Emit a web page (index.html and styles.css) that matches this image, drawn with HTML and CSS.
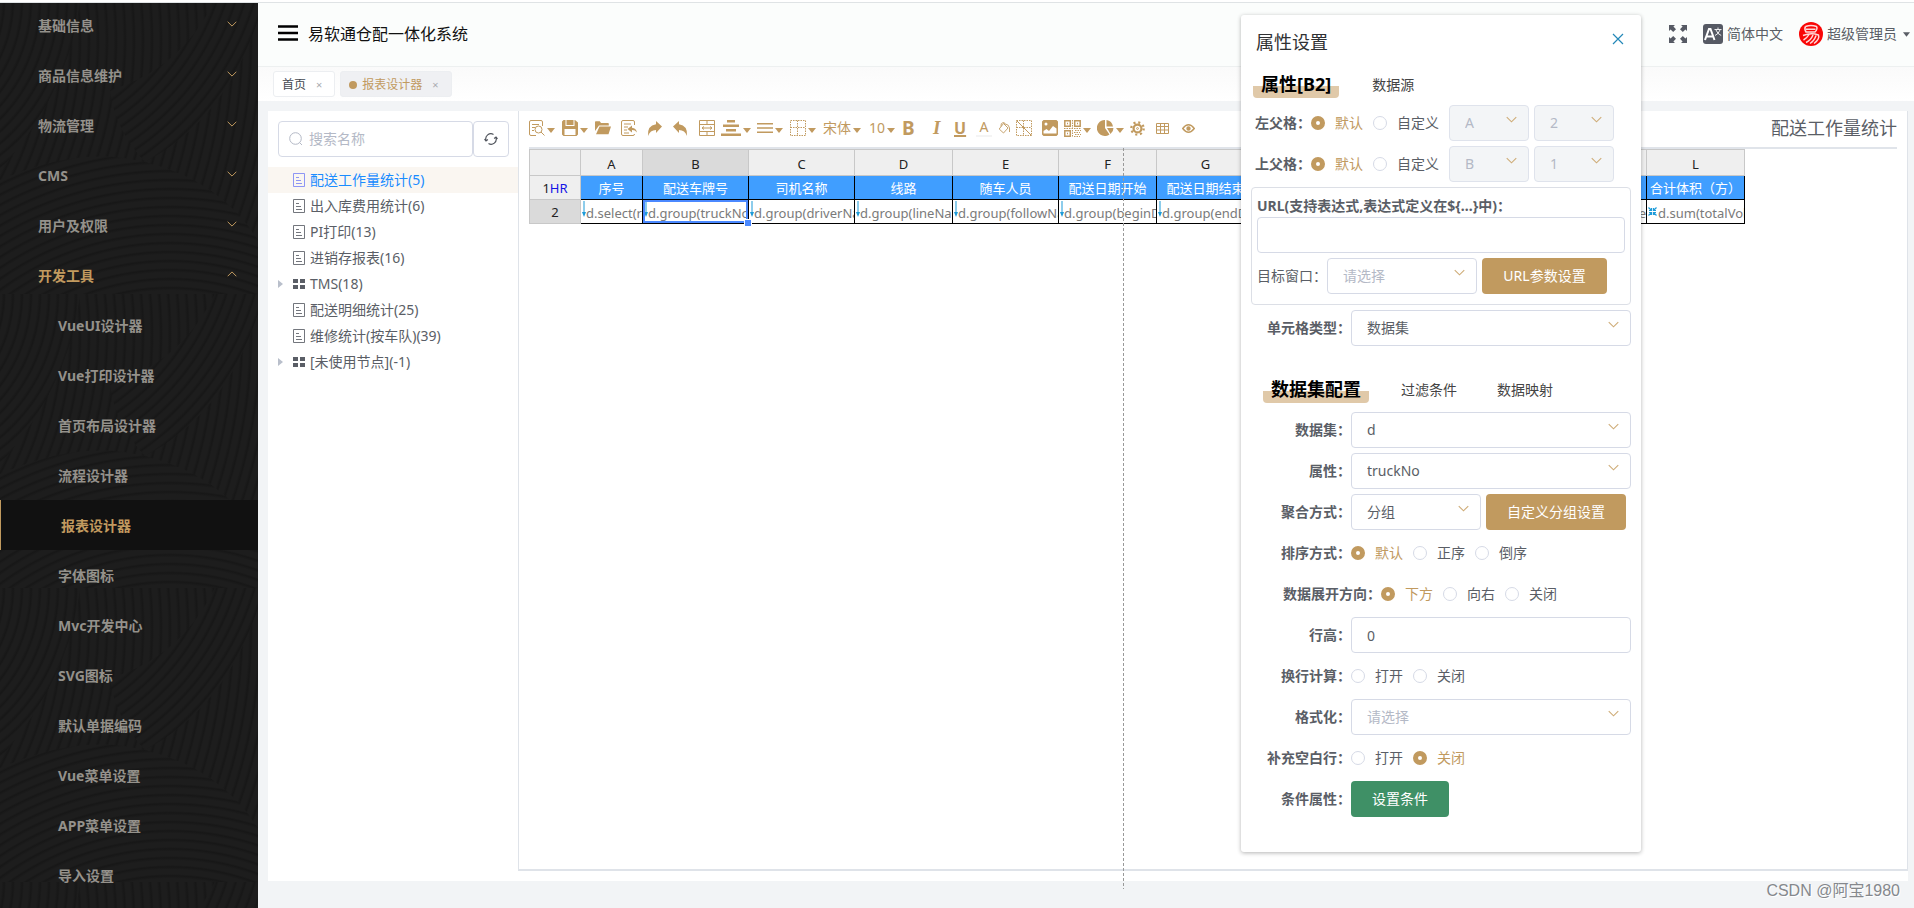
FILE: index.html
```html
<!DOCTYPE html>
<html lang="zh-CN">
<head>
<meta charset="utf-8">
<title>易软通仓配一体化系统</title>
<link rel="stylesheet" href="styles.css">
</head>
<body>
<svg class="defs" aria-hidden="true">
  <defs>
    <symbol id="chev" viewBox="0 0 12 7"><path d="M.8.8 6 6 11.2.8" fill="none" stroke="currentColor" stroke-width="1.2"/></symbol>
    <symbol id="caret" viewBox="0 0 8 5"><path d="M0 0h8L4 5z" fill="currentColor"/></symbol>
    <symbol id="doc" viewBox="0 0 12 14"><path d="M.5.5h11v13H.5zM3 4.500h3M3 7.500h5M3 10.500h6" fill="none" stroke="currentColor" stroke-opacity=".85"/></symbol>
    <symbol id="grid4" viewBox="0 0 12 12"><path d="M0 1h5v4H0zM7 1h5v4H7zM0 7h5v4H0zM7 7h5v4H7z" fill="currentColor"/></symbol>
    <symbol id="down" viewBox="0 0 4 16"><path d="M2 0v12" stroke="#1d9bd8" fill="none"/><path d="M0 11h4L2 16z" fill="#1d9bd8"/></symbol>
  </defs>
</svg>
<div class="app">
  <aside class="side">
    <svg class="side-bg" aria-hidden="true">
      <defs>
        <radialGradient id="g1" gradientUnits="userSpaceOnUse" cx="-260" cy="40" r="9" spreadMethod="repeat"><stop offset="0" stop-color="#1d1d1d"/><stop offset=".5" stop-color="#1d1d1d"/><stop offset=".8" stop-color="#171717"/><stop offset="1" stop-color="#1d1d1d"/></radialGradient>
        <radialGradient id="g2" href="#g1" gradientUnits="userSpaceOnUse" cx="-20" cy="-80" r="9" spreadMethod="repeat"/>
        <radialGradient id="g3" href="#g1" gradientUnits="userSpaceOnUse" cx="170" cy="520" r="9" spreadMethod="repeat"/>
        <radialGradient id="g4" href="#g1" gradientUnits="userSpaceOnUse" cx="-120" cy="0" r="9" spreadMethod="repeat"/>
        <pattern id="waves" width="258" height="294" patternUnits="userSpaceOnUse">
          <rect width="258" height="294" fill="url(#g1)"/>
          <path d="M0 0H80Q70 90 0 170z" fill="url(#g4)"/>
          <path d="M258 20Q225 120 145 162Q115 130 110 90Q180 70 215 0H258z" fill="url(#g2)"/>
          <path d="M0 180Q80 145 145 162Q220 180 258 240V294H0z" fill="url(#g3)"/>
        </pattern>
      </defs>
      <rect width="100%" height="100%" fill="url(#waves)"/>
    </svg>
    <nav class="menu">
      <a href="#">基础信息<svg><use href="#chev"/></svg></a>
      <a href="#">商品信息维护<svg><use href="#chev"/></svg></a>
      <a href="#">物流管理<svg><use href="#chev"/></svg></a>
      <a href="#">CMS<svg><use href="#chev"/></svg></a>
      <a href="#">用户及权限<svg><use href="#chev"/></svg></a>
      <a href="#" class="open">开发工具<svg><use href="#chev"/></svg></a>
      <a href="#" class="sub">VueUI设计器</a>
      <a href="#" class="sub">Vue打印设计器</a>
      <a href="#" class="sub">首页布局设计器</a>
      <a href="#" class="sub">流程设计器</a>
      <a href="#" class="sub active">报表设计器</a>
      <a href="#" class="sub">字体图标</a>
      <a href="#" class="sub">Mvc开发中心</a>
      <a href="#" class="sub">SVG图标</a>
      <a href="#" class="sub">默认单据编码</a>
      <a href="#" class="sub">Vue菜单设置</a>
      <a href="#" class="sub">APP菜单设置</a>
      <a href="#" class="sub">导入设置</a>
    </nav>
  </aside>

  <div class="main">
    <header class="top">
      <button class="burger" aria-label="菜单"><svg width="20" height="16" viewBox="0 0 20 16"><path d="M0 1.500h20M0 8h20M0 14.500h20" stroke="#000" stroke-width="2.400"/></svg></button>
      <h1>易软通仓配一体化系统</h1>
      <div class="user">
        <button aria-label="全屏"><svg width="18" height="18" viewBox="0 0 18 18" fill="#565a64"><path d="M0 0h6L4.400 1.600 7 4.200 4.200 7 1.600 4.400 0 6zM18 0v6l-1.600-1.600L13.800 7 11 4.200l2.600-2.600L12 0zM0 18v-6l1.600 1.600L4.200 11 7 13.800l-2.600 2.600L6 18zM18 18h-6l1.600-1.600L11 13.800 13.800 11l2.600 2.600L18 12z"/></svg></button>
        <button class="lang"><svg width="20" height="20" viewBox="0 0 20 20"><rect width="20" height="20" rx="3" fill="#565a64"/><path d="M2 16 6 5h1.500l4 11M3.500 12.500h6.500" stroke="#fff" stroke-width="2" fill="none"/><path d="M11.500 5.500h7M15 3.500v2M17 6q-1.500 4-5 5.500M13 6q1.500 4 5.200 5.500" stroke="#fff" stroke-width=".9" fill="none"/></svg>简体中文</button>
        <button class="who"><svg width="24" height="24" viewBox="0 0 24 24"><circle cx="12" cy="12" r="12" fill="#f90606"/><g fill="none" stroke="#ffd9d9" stroke-width="1.500"><path d="M6.500 4.500Q12 2.500 17.500 4.500 19 7 16 10H7Q5 7 6.500 4.500M7 7.300h9.500M4 13.500Q12 10.500 19.500 13 21 17 15 21.500M10 12.500Q8 16 4.500 18M14 13q-2 5-7 7.500M17 13.500q-1.500 5-6 8"/></g></svg>超级管理员<svg class="car" width="7" height="5"><use href="#caret"/></svg></button>
      </div>
    </header>
    <nav class="tags">
      <a href="#">首页<span>×</span></a>
      <a href="#" class="on"><i></i>报表设计器<span>×</span></a>
    </nav>

    <div class="card">
      <section class="tree">
        <div class="search">
          <label class="field"><svg width="14" height="14" viewBox="0 0 14 14" fill="none" stroke="#b4b9c6"><circle cx="6.500" cy="6.500" r="5.800"/><path d="m10.500 10.500 2.500 2.500"/></svg><input type="text" placeholder="搜索名称" aria-label="搜索名称"></label>
          <button aria-label="刷新"><svg width="14" height="14" viewBox="0 0 14 14" fill="none" stroke="#50545c" stroke-width="1.200"><path d="M2 8.500A5.200 5.200 0 0 1 9.500 2.400M12 5.500A5.200 5.200 0 0 1 4.500 11.600M.5 7.200 2 9l1.900-1.400M10.100 6.400 12 5l1.500 1.800"/></svg></button>
        </div>
        <ul>
          <li class="sel"><b></b><svg><use href="#doc"/></svg>配送工作量统计(5)</li>
          <li><b></b><svg><use href="#doc"/></svg>出入库费用统计(6)</li>
          <li><b></b><svg><use href="#doc"/></svg>PI打印(13)</li>
          <li><b></b><svg><use href="#doc"/></svg>进销存报表(16)</li>
          <li><b class="tri"></b><svg><use href="#grid4"/></svg>TMS(18)</li>
          <li><b></b><svg><use href="#doc"/></svg>配送明细统计(25)</li>
          <li><b></b><svg><use href="#doc"/></svg>维修统计(按车队)(39)</li>
          <li><b class="tri"></b><svg><use href="#grid4"/></svg>[未使用节点](-1)</li>
        </ul>
      </section>

      <section class="design">
        <div class="bar">
          <button class="w27" aria-label="预览"><svg width="16" height="16" viewBox="0 0 16 16" class="ln"><path d="M13.500 6V2Q13.500.5 12 .5H2Q.5.500.5 2v12q0 1.500 1.500 1.500h5M3 4.500h7M3 7.500h3M3 10.500h2"/><circle cx="9.500" cy="9.500" r="3.500"/><path d="m12 12 3.500 3.500"/></svg><svg class="car" width="8" height="5"><use href="#caret"/></svg></button>
          <button class="w27" aria-label="保存"><svg width="16" height="16" viewBox="0 0 16 16" class="fl"><path fill-rule="evenodd" d="M1.500 0H13l3 2.500v12L14.500 16h-13L0 14.500v-13zM3.500 0v6h9V0h-1v5h-7V0zM2.500 9v6h11V9z"/><path d="M8.500.5h2.500v4H8.500z"/></svg><svg class="car" width="8" height="5"><use href="#caret"/></svg></button>
          <button class="w20" aria-label="打开"><svg width="16" height="14" viewBox="0 0 16 14" class="fl"><path d="M0 10V1q0-.8.8-.8h4L6 2h7q.8 0 .8.800V4.500H4zM4.500 5.500H16L13.500 13.300H1z"/></svg></button>
          <button class="w20" aria-label="导入"><svg width="16" height="16" viewBox="0 0 16 16" class="ln"><path d="M13.500 5V2Q13.500.5 12 .5H2Q.5.500.5 2v12q0 1.500 1.500 1.500h10q1.500 0 1.500-1.500M3 4h7M3 7h4M3 10h3M3 13h5"/><path class="fl" stroke="none" d="M6.500 9 11 5.500v2.200q4 .3 5 4.800-2-2.500-5-2.400v2.300z"/></svg></button>
          <button class="w20" aria-label="重做"><svg width="15" height="15" viewBox="0 0 15 15" class="fl"><path d="M15 5.500 9 0v3.200Q0 4.500 1 15q2-6 8-6v3z"/></svg></button>
          <button class="w20" aria-label="撤销"><svg width="15" height="15" viewBox="0 0 15 15" class="fl"><path d="M0 5.500 6 0v3.200q9 1.300 8 11.800Q12 9 6 9v3z"/></svg></button>
          <button class="w16" aria-label="合并单元格"><svg width="16" height="16" viewBox="0 0 16 16" class="ln"><path d="M.5.500h15v15H.5zM.5 4.500h15M.5 11.500h15M8 .5v4M8 11.500v4M3 8h10M5 6.500 3 8l2 1.500M11 6.500 13 8l-2 1.500"/></svg></button>
          <button class="w30" aria-label="水平对齐"><svg width="20" height="16" viewBox="0 0 20 16" class="fl"><path d="M6 0h8v2.500H6zM2 4.500h16V7H2zM5 9h10v2.500H5zM0 13.500h20V16H0z"/></svg><svg class="car" width="8" height="5"><use href="#caret"/></svg></button>
          <button class="w27" aria-label="垂直对齐"><svg width="16" height="10" viewBox="0 0 16 10" class="fl"><path d="M0 0h16v1.600H0zM0 4.200h16v1.600H0zM0 8.400h16V10H0z"/></svg><svg class="car" width="8" height="5"><use href="#caret"/></svg></button>
          <button class="w27" aria-label="边框"><svg width="16" height="16" viewBox="0 0 16 16" class="ln" stroke-dasharray="1.500 1"><path d="M.5.500h15v15H.5zM.5 7.500h15M7.500.5v15"/></svg><svg class="car" width="8" height="5"><use href="#caret"/></svg></button>
          <button class="w40">宋体<svg class="car" width="8" height="5"><use href="#caret"/></svg></button>
          <button class="w27">10<svg class="car" width="8" height="5"><use href="#caret"/></svg></button>
          <button class="w20 bold">B</button>
          <button class="w20 ital">I</button>
          <button class="w16 under">U</button>
          <button class="w16 fore">A</button>
          <button class="w12" aria-label="填充"><svg width="13" height="13" viewBox="0 0 13 13" class="ln" stroke-width=".9"><path d="M5.500 1.500 10 6 5.500 11 1.200 7zM3 4.500Q2.500 1 5 .6T7 3M7.500 2q3.500.5 4 4v4"/></svg></button>
          <button class="w20" aria-label="斜线"><svg width="16" height="16" viewBox="0 0 16 16" class="ln"><path stroke-dasharray="1.500 1" d="M.5.500h15v15H.5zM.5 7.500h15M7.500.5v15"/><path d="m.5.500 15 15"/></svg></button>
          <button class="w16" aria-label="图片"><svg width="16" height="16" viewBox="0 0 16 16" class="fl"><path fill-rule="evenodd" d="M1.500 0h13L16 1.500v13L14.500 16h-13L0 14.500v-13zM1.500 11v2.500h13V8.500L11 6l-4 5-2.500-2zM2.500 4a1.500 1.500 0 1 0 3 0 1.500 1.500 0 1 0-3 0"/></svg></button>
          <button class="w27" aria-label="二维码"><svg width="17" height="17" viewBox="0 0 17 17" class="ln"><path stroke-width="1.500" d="M.8.800h5.500v5.500H.8zM10.700.800h5.500v5.500h-5.500zM.8 10.700h5.500v5.500H.8zM3 3.500h1M13 3.500h1M3 13.500h1"/><path stroke-dasharray="1.500 1" d="M8.500 0v17M0 8.500h17M11 10.500h6M10 12.500h6M11 14.500h6M10 16.500h6"/></svg><svg class="car" width="8" height="5"><use href="#caret"/></svg></button>
          <button class="w27" aria-label="图表"><svg width="17" height="16" viewBox="0 0 17 16" class="fl"><path d="M8 0v8l4.500 6.500A8 8 0 1 1 8 0zM9.500 0a8 8 0 0 1 6.500 6.500H9.500z"/><path d="M10 8h6.500q0 3.500-3 6z"/></svg><svg class="car" width="8" height="5"><use href="#caret"/></svg></button>
          <button class="w20" aria-label="设置"><svg width="15" height="15" viewBox="0 0 16 16" fill="none" stroke="#c19a5f"><circle cx="8" cy="8" r="4.200" stroke-width="2.400"/><circle cx="8" cy="8" r="6.600" stroke-width="2.400" stroke-dasharray="2.200 2.983"/><circle cx="8" cy="8" r="1"/></svg></button>
          <button class="w20" aria-label="表格"><svg width="13" height="11" viewBox="0 0 13 11" class="ln"><path d="M.5.500h12v10H.5zM.5 3.500h12M.5 7h12M4.500.5v10M8.500.5v10"/></svg></button>
          <button class="w16" aria-label="查看"><svg width="13" height="9" viewBox="0 0 13 9" class="ln" stroke-width="1.400"><path d="M.7 4.500Q6.500-3 12.300 4.500 6.500 12 .7 4.500z"/><circle cx="6.500" cy="4.500" r="1.500" fill="#c19a5f"/></svg></button>
          <strong class="name">配送工作量统计</strong>
        </div>

        <div class="sheet">
          <table>
            <colgroup><col class="c51"><col class="c62"><col class="c106"><col class="c106"><col class="c98"><col class="c106"><col class="c98"><col class="c98"><col class="c98"><col class="c98"><col class="c98"><col class="c98"><col class="c98"></colgroup>
            <thead><tr><th></th><th>A</th><th class="cur">B</th><th>C</th><th>D</th><th>E</th><th>F</th><th>G</th><th>H</th><th>I</th><th>J</th><th>K</th><th>L</th></tr></thead>
            <tbody>
              <tr class="r1"><th>1<em>HR</em></th><td>序号</td><td>配送车牌号</td><td>司机名称</td><td>线路</td><td>随车人员</td><td>配送日期开始</td><td>配送日期结束</td><td></td><td></td><td></td><td></td><td>合计体积（方）</td></tr>
              <tr class="r2"><th class="cur">2</th>
                <td><div><svg><use href="#down"/></svg>d.select(rowNo)</div></td>
                <td class="pick"><div><svg><use href="#down"/></svg>d.group(truckNo)</div></td>
                <td><div><svg><use href="#down"/></svg>d.group(driverName)</div></td>
                <td><div><svg><use href="#down"/></svg>d.group(lineName)</div></td>
                <td><div><svg><use href="#down"/></svg>d.group(followName)</div></td>
                <td><div><svg><use href="#down"/></svg>d.group(beginDate)</div></td>
                <td><div><svg><use href="#down"/></svg>d.group(endDate)</div></td>
                <td></td><td></td><td></td><td><div class="end">e</div></td>
                <td><div class="sum"><svg viewBox="0 0 9 9" fill="none" stroke="#1d9bd8" stroke-width="1.200"><path d="m.5.500 3 3m5-3-3 3m-5 5 3-3m5 3-3-3M3.500 1v2.500H1M5.500 1v2.500H8M3.500 8V5.500H1M5.500 8V5.500H8"/></svg>d.sum(totalVolume)</div></td></tr>
            </tbody>
          </table>
        </div>
        <div class="guide"></div>
      </section>
    </div>
  </div>
</div>

<section class="panel" role="dialog" aria-label="属性设置">
  <div class="phead"><h2>属性设置</h2><button aria-label="关闭"><svg width="12" height="12" viewBox="0 0 12 12"><path d="m1 1 10 10M11 1 1 11" stroke="#2488b8" stroke-width="1.200"/></svg></button></div>
  <div class="tabs"><button class="on">属性[B2]</button><button>数据源</button></div>
  <div class="row near"><b>左父格：</b><label><input type="radio" name="lf" checked><span>默认</span></label><label><input type="radio" name="lf"><span>自定义</span></label>
    <span class="sel w80"><select disabled aria-label="左父格列"><option>A</option></select><svg><use href="#chev"/></svg></span><span class="sel w80"><select disabled aria-label="左父格行"><option>2</option></select><svg><use href="#chev"/></svg></span></div>
  <div class="row near"><b>上父格：</b><label><input type="radio" name="uf" checked><span>默认</span></label><label><input type="radio" name="uf"><span>自定义</span></label>
    <span class="sel w80"><select disabled aria-label="上父格列"><option>B</option></select><svg><use href="#chev"/></svg></span><span class="sel w80"><select disabled aria-label="上父格行"><option>1</option></select><svg><use href="#chev"/></svg></span></div>
  <div class="box">
    <label class="url" for="url">URL(支持表达式,表达式定义在${...}中)：</label>
    <input class="txt" id="url" type="text">
    <div class="target"><label for="tgt">目标窗口：</label><span class="sel ph w150"><select id="tgt"><option>请选择</option></select><svg><use href="#chev"/></svg></span><button class="btn w125">URL参数设置</button></div>
  </div>
  <div class="row"><label class="lab" for="ct">单元格类型：</label><span class="sel"><select id="ct"><option>数据集</option></select><svg><use href="#chev"/></svg></span></div>
  <div class="tabs second"><button class="on">数据集配置</button><button>过滤条件</button><button>数据映射</button></div>
  <div class="row"><label class="lab" for="ds">数据集：</label><span class="sel"><select id="ds"><option>d</option></select><svg><use href="#chev"/></svg></span></div>
  <div class="row"><label class="lab" for="pr">属性：</label><span class="sel"><select id="pr"><option>truckNo</option></select><svg><use href="#chev"/></svg></span></div>
  <div class="row"><label class="lab" for="ag">聚合方式：</label><span class="sel w130"><select id="ag"><option>分组</option></select><svg><use href="#chev"/></svg></span><button class="btn w140">自定义分组设置</button></div>
  <div class="row"><b class="lab">排序方式：</b><label><input type="radio" name="so" checked><span>默认</span></label><label><input type="radio" name="so"><span>正序</span></label><label><input type="radio" name="so"><span>倒序</span></label></div>
  <div class="row"><b class="lab wide">数据展开方向：</b><label><input type="radio" name="di" checked><span>下方</span></label><label><input type="radio" name="di"><span>向右</span></label><label><input type="radio" name="di"><span>关闭</span></label></div>
  <div class="row"><label class="lab" for="rh">行高：</label><input class="txt" id="rh" type="text" value="0"></div>
  <div class="row"><b class="lab">换行计算：</b><label><input type="radio" name="wr"><span>打开</span></label><label><input type="radio" name="wr"><span>关闭</span></label></div>
  <div class="row"><label class="lab" for="fm">格式化：</label><span class="sel ph"><select id="fm"><option>请选择</option></select><svg><use href="#chev"/></svg></span></div>
  <div class="row"><b class="lab">补充空白行：</b><label><input type="radio" name="bl"><span>打开</span></label><label><input type="radio" name="bl" checked><span>关闭</span></label></div>
  <div class="row"><b class="lab">条件属性：</b><button class="btn green">设置条件</button></div>
</section>
<div class="mark">CSDN @阿宝1980</div>
</body>
</html>
```
FILE: styles.css
```css
* { box-sizing: border-box; }
body {
  margin: 0;
  font: 14px/20px "Noto Sans", "Noto Sans CJK SC", sans-serif;
  color: #5a5e66;
  background: #f2f4f6;
}
body::before {
  content: "";
  position: absolute;
  top: 0; left: 0; right: 0;
  height: 2px;
  z-index: 5;
  background: #fff;
  border-bottom: 1px solid #dfe3e5;
}
button, input, select { font: inherit; color: inherit; margin: 0; }
button { border: 0; padding: 0; background: none; cursor: pointer; }
a { color: inherit; text-decoration: none; }
svg { flex: none; display: block; }
.defs { position: absolute; width: 0; height: 0; }

.app { display: flex; height: 100vh; overflow: hidden; }

/* sidebar */
.side { position: relative; flex: none; width: 258px; background: #1c1c1c; overflow: hidden; }
.side-bg { position: absolute; inset: 0; width: 100%; height: 100%; }
.menu { position: relative; }
.menu a {
  display: flex; align-items: center; justify-content: space-between;
  height: 50px; padding: 2px 21px 0 38px;
  font-weight: 700; color: #94918b;
}
.menu svg { width: 10px; height: 6px; margin-bottom: 4px; color: #c19a5f; }
.menu .open { color: #c19a5f; }
.menu .open svg { transform: rotate(180deg); }
.menu .sub { padding-left: 58px; }
.menu .active { background: #111; color: #c19a5f; border-left: 1px solid #c19a5f; padding-left: 60px; }

/* header */
.main { flex: 1; min-width: 0; display: flex; flex-direction: column; }
.top {
  display: flex; align-items: center; gap: 10px;
  height: 67px; padding: 0 4px 0 20px;
  background: #fbfdfc; border-bottom: 1px solid #edf0f0;
}
.top h1 { margin: 0; font-size: 16px; line-height: 24px; font-weight: 400; color: #111; padding-top: 2px; }
.user { margin-left: auto; display: flex; align-items: center; gap: 16px; padding-top: 2px; }
.user button { display: flex; align-items: center; gap: 4px; }
.user .who .car { margin-left: 2px; }
.tags {
  display: flex; gap: 5px; height: 34px; padding: 4px 15px;
  background: linear-gradient(#fafafa, #fff);
}
.tags a {
  display: flex; align-items: center; height: 26px; padding: 2px 12px 0 8px;
  border: 1px solid #eceef1; border-radius: 3px; background: #fff;
  font-size: 12px; color: #444a52;
}
.tags span { margin-left: 10px; color: #a9abb0; font-size: 11px; }
.tags i { width: 8px; height: 8px; margin-right: 5px; border-radius: 50%; background: #c19a5f; }
.tags .on { background: #eff0f3; color: #c19a5f; }

.card { flex: 1; display: flex; min-height: 0; margin: 10px 6px 27px 10px; padding-bottom: 10px; background: #fff; }

/* report tree */
.tree { flex: none; width: 250px; }
.search { display: flex; padding: 10px 9px 10px 10px; }
.field, .search button {
  display: flex; align-items: center; height: 36px;
  border: 1px solid #d6dae6; border-radius: 4px;
}
.field { flex: 1; gap: 4px; padding-left: 10px; }
.field input { width: 100%; min-width: 0; border: 0; outline: 0; background: none; }
.field input::placeholder { color: #b4b9c6; }
.search button { width: 36px; justify-content: center; }
.tree ul { margin: 0; padding: 0; list-style: none; }
.tree li { display: flex; align-items: center; height: 26px; padding-left: 10px; }
.tree li b { width: 15px; }
.tree .tri::before { content: ""; display: block; width: 0; border: 4px solid transparent; border-left: 5px solid #b9bfcb; border-right: 0; }
.tree li svg { width: 12px; height: 14px; margin-right: 5px; color: #5a5e66; }
.tree .sel { background: #faf6f1; color: #1a8cff; }
.tree .sel svg { color: #7a85f5; }

/* designer */
.design { position: relative; flex: 1; min-width: 0; border: solid #dfe3e9; border-width: 0 1px 2px; padding: 0 10px; }
.bar { display: flex; align-items: center; gap: 6px; height: 38px; padding-bottom: 2px; border-bottom: 2px solid #e0e4ea; color: #c19a5f; }
.bar button { flex: none; display: flex; align-items: center; height: 30px; }
.bar .car { margin: 5px 0 0 2px; }
.ln { fill: none; stroke: #c19a5f; }
.fl { fill: #c19a5f; }
.w12 { width: 12px; } .w16 { width: 16px; } .w20 { width: 20px; }
.w27 { width: 27px; } .w30 { width: 30px; } .w40 { width: 40px; }
.bar .bold { font-size: 19px; font-weight: 700; }
.bar .ital { font: italic 700 19px "Liberation Serif", serif; padding-left: 5px; }
.bar .under { font-size: 16px; font-weight: 700; text-decoration: underline; text-decoration-thickness: 2px; }
.bar .fore { height: 18px; justify-content: center; border-bottom: 2px solid #f4f4f4; }
.name { margin-left: auto; font-size: 18px; font-weight: 400; color: #5a5e66; }
.sheet { font-size: 13px; line-height: 18px; }
table { border-collapse: collapse; table-layout: fixed; width: 1215px; }
.c51 { width: 51px; } .c62 { width: 62px; } .c98 { width: 98px; } .c106 { width: 106px; }
th, td { padding: 0; text-align: center; font-weight: 400; overflow: hidden; white-space: nowrap; }
th { background: #efefef; border: 1px solid #c8c8c8; color: #222; }
th.cur { background: #dadada; }
th em { font-style: normal; color: #1414e6; }
thead th { height: 26px; padding-top: 2px; }
tbody tr { height: 24px; }
td { border: 1px solid #000; }
.r1 td { background: #409eff; color: #fff; }
.r2 td { position: relative; text-align: left; color: #7a7a7a; }
.r2 div { display: flex; overflow: hidden; height: 22px; padding: 3px 0 0 1px; }
.r2 div svg { width: 4px; height: 16px; margin-top: -3px; }
.r2 .sum svg { width: 9px; height: 9px; margin: 3px 1px 0 0; }
.r2 .end { justify-content: flex-end; }
.r2 .pick { overflow: visible; }
.pick::before { content: ""; position: absolute; inset: 0; border: 2px solid #4b89ff; }
.pick::after { content: ""; position: absolute; right: -3px; bottom: -3px; width: 6px; height: 6px; background: #4b89ff; box-shadow: 0 0 0 1px #fff; }
.guide {
  position: absolute; left: 604px; top: 37px; bottom: -20px; width: 1px;
  background: repeating-linear-gradient(#999 0 3px, transparent 3px 5px);
}

/* property dialog */
.panel {
  position: absolute; top: 15px; right: 273px; width: 400px;
  padding: 0 10px 30px; background: #fff; border-radius: 3px;
  box-shadow: 0 1px 4px rgba(0, 0, 0, .3);
}
.phead { display: flex; align-items: center; justify-content: space-between; height: 48px; padding: 6px 7px 0 5px; }
.phead button { padding-bottom: 6px; }
.phead h2 { margin: 0; font-size: 18px; line-height: 24px; font-weight: 400; color: #303133; }
.tabs { display: flex; align-items: center; height: 42px; padding: 0 2px; gap: 33px; }
.tabs button { height: 28px; color: #444; }
.tabs button + button { padding-top: 2px; }
.tabs .on { padding: 0 8px; font-size: 18px; line-height: 24px; font-weight: 700; color: #000; background: linear-gradient(#e0c9a9, #e0c9a9) 0 100% / 100% 12px no-repeat; border-radius: 4px; }
.second { height: 46px; margin-top: 20px; padding: 0 12px; gap: 32px; }
.second button + button + button { margin-left: 8px; }
.row { display: flex; align-items: center; height: 36px; margin-bottom: 5px; }
.near { padding-left: 4px; }
.row b, .lab { font-weight: 700; }
.lab { flex: none; width: 100px; text-align: right; }
.lab.wide { width: 130px; }
.row label:not(.lab) { display: flex; align-items: center; margin-right: 10px; }
.row label span { margin-left: 10px; }
input[type="radio"] {
  appearance: none; width: 14px; height: 14px;
  border: 1px solid #d6dae6; border-radius: 50%; background: #fff;
}
input[type="radio"]:checked { border: 5px solid #c19a5f; }
input[type="radio"]:checked + span { color: #c19a5f; }
.sel { position: relative; }
.row .sel, .row .txt { flex: 1; }
.panel .w80 { flex: none; width: 80px; margin-right: 5px; }
.panel .w130 { flex: none; width: 130px; margin-right: 5px; }
.panel .w150 { flex: none; width: 150px; margin-right: 5px; }
.sel select, .txt {
  appearance: none; display: block; width: 100%; height: 36px; padding: 0 15px;
  border: 1px solid #d6dae6; border-radius: 4px; background: #fff; outline: 0; opacity: 1;
}
.sel select:disabled { background: #f3f5f7; color: #b4b9c6; border-color: #dfe3ec; }
.ph select { color: #b4b9c6; }
.panel .sel svg { position: absolute; right: 12px; top: 11px; width: 11px; height: 7px; color: #cfac78; pointer-events: none; }
.box { display: flex; flex-direction: column; height: 118px; margin-bottom: 5px; padding: 8px 5px; border: 1px solid #dcdfe6; border-radius: 4px; }
.url { font-weight: 700; margin-bottom: 1px; }
.target { display: flex; align-items: center; margin-top: 5px; }
.btn { height: 36px; border-radius: 4px; background: #c19a5f; color: #fff; }
.w125 { width: 125px; }
.w140 { width: 140px; }
.green { width: 98px; background: #3f9066; }

.mark {
  position: absolute; right: 14px; bottom: 6px;
  font: 16px/22px "Liberation Sans", "Noto Sans CJK SC", sans-serif;
  color: #85888d; text-shadow: 1px 1px 0 #fff;
}
```
